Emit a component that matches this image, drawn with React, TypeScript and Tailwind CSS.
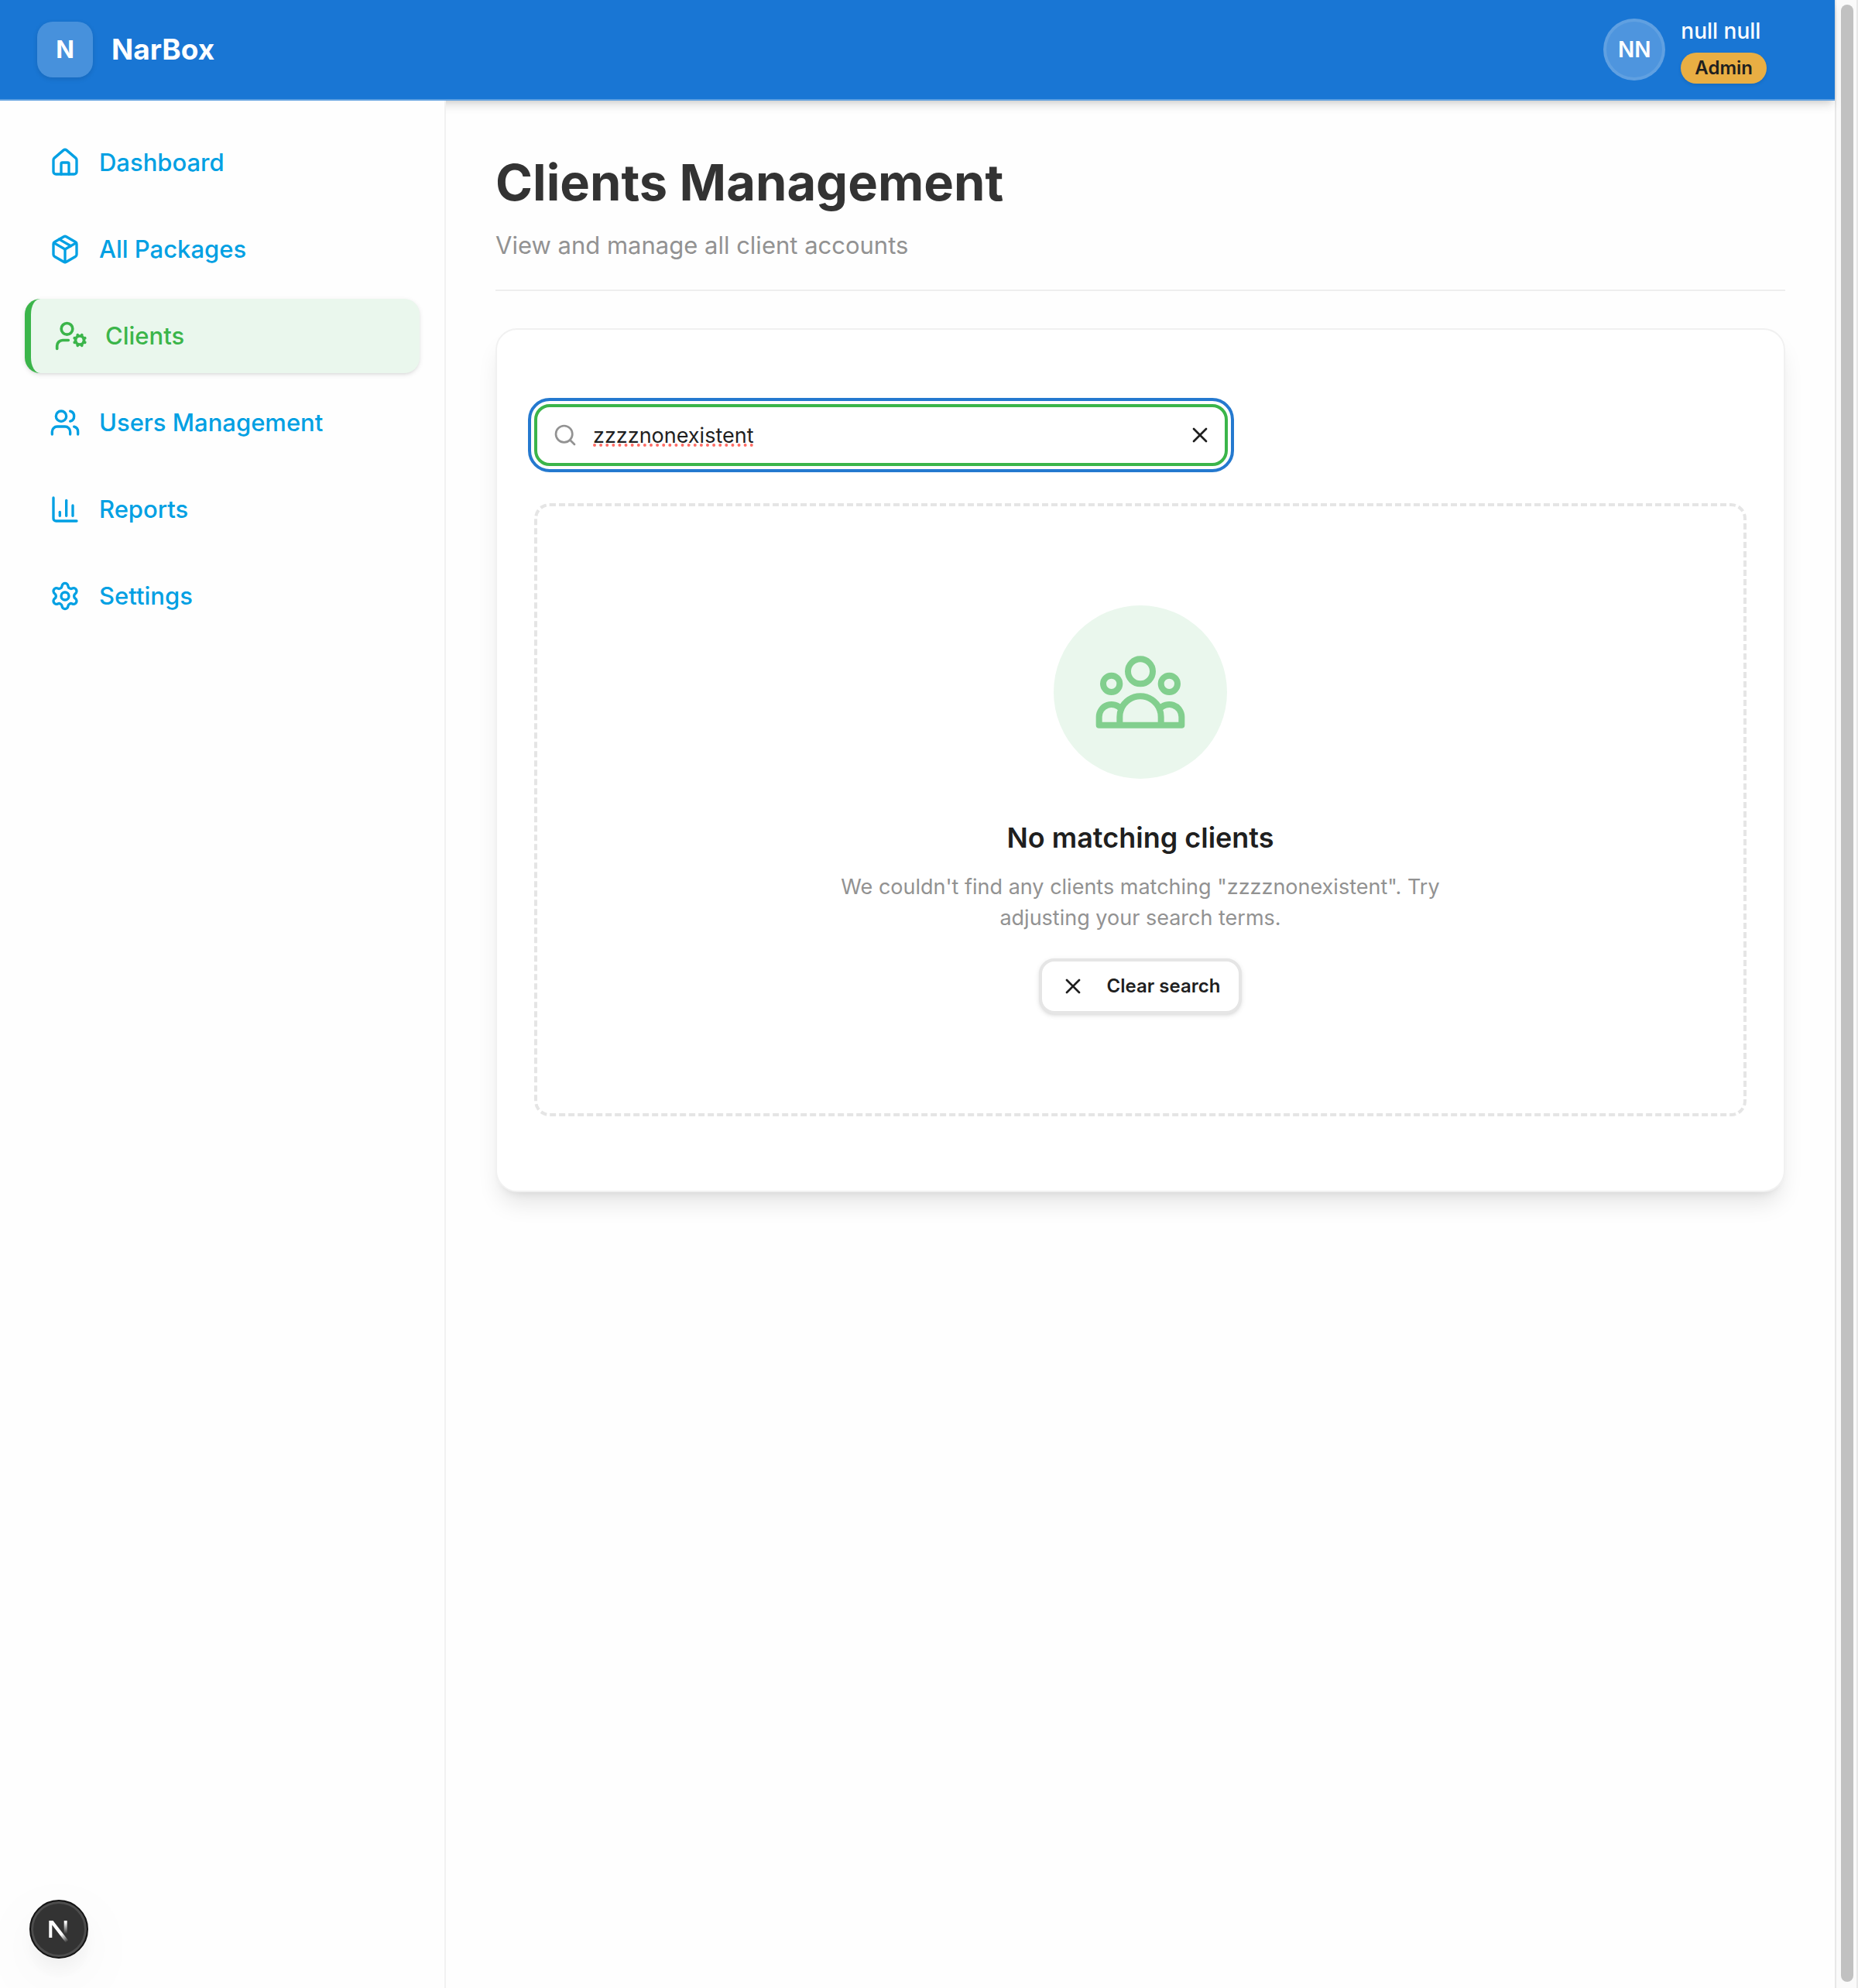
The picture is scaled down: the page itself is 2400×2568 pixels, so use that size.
import { useState } from "react";
import {
  ChartColumn,
  House,
  Package,
  Search,
  Settings,
  UserCog,
  Users,
  X,
  type LucideIcon,
} from "lucide-react";

type NavItem = { label: string; icon: LucideIcon; active?: boolean };

const NAV_ITEMS: NavItem[] = [
  { label: "Dashboard", icon: House },
  { label: "All Packages", icon: Package },
  { label: "Clients", icon: UserCog, active: true },
  { label: "Users Management", icon: Users },
  { label: "Reports", icon: ChartColumn },
  { label: "Settings", icon: Settings },
];

function Header() {
  return (
    <header className="relative z-10 flex h-[130px] items-center justify-between border-b-2 border-[#5e9fe0] bg-[#1976d4] pr-[88px] pl-12 text-white shadow-[0_8px_12px_-2px_rgba(0,0,0,0.12),0_4px_8px_-4px_rgba(0,0,0,0.12)]">
      <a href="#" className="flex items-center gap-6">
        <span className="flex size-[72px] items-center justify-center rounded-[20px] bg-white/20 text-[31px] font-bold shadow-[0_2px_6px_rgba(0,0,0,0.12)]">
          N
        </span>
        <span className="text-[37px] font-bold">NarBox</span>
      </a>
      <div className="flex items-center gap-5">
        <div className="flex size-20 items-center justify-center rounded-full border-4 border-white/10 bg-white/23 text-[28px] font-semibold">
          NN
        </div>
        <div className="flex flex-col items-start gap-2">
          <span className="text-[28px] leading-10 font-medium">null null</span>
          <span className="rounded-full bg-[#e9ae43] px-[18px] text-[24px] leading-10 font-semibold text-[#1f1f1f] shadow-[0_2px_4px_rgba(0,0,0,0.1)]">
            Admin
          </span>
        </div>
      </div>
    </header>
  );
}

function Sidebar() {
  return (
    <aside className="relative z-20 w-[576px] shrink-0 border-r-2 border-[#f1f1f1] bg-[#fefefe] p-8">
      <nav aria-label="Main">
        <ul className="flex flex-col gap-4">
          {NAV_ITEMS.map(({ label, icon: Icon, active }) => (
            <li key={label}>
              <a
                href="#"
                aria-current={active ? "page" : undefined}
                className={
                  active
                    ? "flex h-24 items-center gap-6 rounded-[20px] border-l-8 border-[#3bb54a] bg-[#eaf7ed] px-8 text-[31px] font-medium text-[#3bb54a] shadow-[0_2px_6px_rgba(0,0,0,0.1),0_2px_4px_-2px_rgba(0,0,0,0.1)]"
                    : "flex h-24 items-center gap-6 rounded-[20px] px-8 text-[31px] font-medium text-[#00a0e3]"
                }
              >
                <Icon className={active ? "size-10 scale-110" : "size-10"} strokeWidth={2} />
                {label}
              </a>
            </li>
          ))}
        </ul>
      </nav>
    </aside>
  );
}

function UserGroupIcon() {
  return (
    <svg
      viewBox="0 0 24 24"
      fill="none"
      stroke="currentColor"
      strokeWidth={1.5}
      strokeLinecap="round"
      strokeLinejoin="round"
      className="size-32"
      aria-hidden="true"
    >
      <path d="M17 20h5v-2a3 3 0 0 0-5.356-1.857M17 20H7m10 0v-2c0-.656-.126-1.283-.356-1.857M7 20H2v-2a3 3 0 0 1 5.356-1.857M7 20v-2c0-.656.126-1.283.356-1.857m0 0a5.002 5.002 0 0 1 9.288 0M15 7a3 3 0 1 1-6 0 3 3 0 0 1 6 0zm6 3a2 2 0 1 1-4 0 2 2 0 0 1 4 0zM7 10a2 2 0 1 1-4 0 2 2 0 0 1 4 0z" />
    </svg>
  );
}

function SearchField({ value, onChange }: { value: string; onChange: (value: string) => void }) {
  return (
    <div className="flex h-20 w-full max-w-[896px] items-center gap-5 rounded-[20px] border-4 border-[#3bb54a] bg-white pr-4 pl-5 outline-4 outline-offset-4 outline-[#2479cf]">
      <Search className="size-8 shrink-0 text-[#929292]" strokeWidth={2} aria-hidden="true" />
      <input
        type="text"
        aria-label="Search clients"
        value={value}
        onChange={(event) => onChange(event.target.value)}
        spellCheck={false}
        className="h-full min-w-0 flex-1 bg-transparent text-[27px] text-[#1f1f1f] underline decoration-[#ff6b64] decoration-dotted decoration-4 underline-offset-[2px] outline-none"
      />
      <button type="button" aria-label="Clear" onClick={() => onChange("")} className="-mr-4 p-4 text-[#1f1f1f]">
        <X className="size-8" strokeWidth={2} />
      </button>
    </div>
  );
}

function EmptyState({ query, onClear }: { query: string; onClear: () => void }) {
  return (
    <div className="flex flex-col items-center rounded-[20px] border-4 border-dashed border-[#e5e5e5] px-8 py-32 text-center">
      <div className="flex size-56 items-center justify-center rounded-full bg-[#eaf7ed] text-[#82cf8e]">
        <UserGroupIcon />
      </div>
      <h2 className="mt-12 text-[36px] leading-[56px] font-semibold text-[#1f1f1f]">No matching clients</h2>
      <p className="mt-4 max-w-[840px] text-[27px] leading-10 text-[#929292]">
        {`We couldn't find any clients matching "${query}". Try adjusting your search terms.`}
      </p>
      <button
        type="button"
        onClick={onClear}
        className="mt-8 flex h-[72px] items-center gap-7 rounded-[20px] border-4 border-[#e5e5e5] bg-white px-6 text-[24px] font-semibold text-[#1f1f1f] shadow-[0_2px_6px_rgba(0,0,0,0.1),0_2px_4px_-2px_rgba(0,0,0,0.1)]"
      >
        <X className="size-8" strokeWidth={2} />
        Clear search
      </button>
    </div>
  );
}

function DevToolsBadge() {
  return (
    <button
      type="button"
      aria-label="Open developer tools"
      className="fixed bottom-[38px] left-[38px] z-30 flex size-[76px] items-center justify-center rounded-full border-2 border-[#141414] bg-[#333333] shadow-[inset_0_0_0_3px_#4d4d4d,0_16px_32px_-8px_rgba(0,0,0,0.08),0_24px_90px_rgba(0,0,0,0.05)]"
    >
      <svg viewBox="0 0 72 72" className="size-[72px] shrink-0" fill="none" aria-hidden="true">
        <defs>
          <linearGradient id="stem" x1="0" y1="27" x2="0" y2="42" gradientUnits="userSpaceOnUse">
            <stop stopColor="white" />
            <stop offset="1" stopColor="white" stopOpacity="0" />
          </linearGradient>
          <linearGradient id="diagonal" x1="39" y1="43" x2="46" y2="53" gradientUnits="userSpaceOnUse">
            <stop stopColor="white" />
            <stop offset="1" stopColor="white" stopOpacity="0" />
          </linearGradient>
        </defs>
        <path d="M23.3 25h5.2l19.7 25.5-3.4 2.7L27.3 30.5V47h-4z" fill="url(#diagonal)" />
        <path d="M42.7 25h4v17h-4z" fill="url(#stem)" />
      </svg>
    </button>
  );
}

function ScrollTrack() {
  return (
    <div className="flex w-[30px] shrink-0 border-r-2 border-l-2 border-[#e8e8e8] bg-[#fafafa] pt-1.5 pb-2 pl-1.5">
      <div className="w-4 rounded-full bg-[#c1c1c1]" />
    </div>
  );
}

export default function App() {
  const [query, setQuery] = useState("zzzznonexistent");

  return (
    <div className="flex min-h-screen bg-[#fefefe] font-['Inter',sans-serif] antialiased">
      <div className="flex min-w-0 flex-1 flex-col">
        <Header />
        <div className="flex flex-1">
          <Sidebar />
          <main className="min-w-0 flex-1 p-16">
            <div className="border-b-2 border-[#eeeeee] pb-8">
              <h1 className="text-[65px] leading-[84px] font-bold text-[#333333]">Clients Management</h1>
              <p className="mt-3.5 text-[31px] leading-[50px] text-[#929292]">View and manage all client accounts</p>
            </div>
            <section className="mt-12 flex flex-col gap-12 rounded-[28px] border-2 border-[#f1f1f1] bg-white px-12 py-24 shadow-[0_20px_30px_-6px_rgba(0,0,0,0.1),0_8px_12px_-8px_rgba(0,0,0,0.1)]">
              <SearchField value={query} onChange={setQuery} />
              <EmptyState query={query} onClear={() => setQuery("")} />
            </section>
          </main>
        </div>
      </div>
      <ScrollTrack />
      <DevToolsBadge />
    </div>
  );
}
